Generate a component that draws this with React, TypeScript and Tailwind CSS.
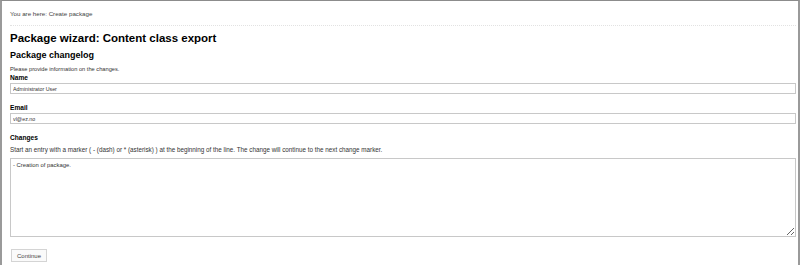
import React from "react";

const App: React.FC = () => {
  return (
    <div className="w-[800px] h-[265px] overflow-hidden bg-white border-t border-l-2 border-r-2 border-t-[#8c8c8c] border-l-[#9a9a9a] border-r-[#9a9a9a] font-['Liberation_Sans',Arial,sans-serif] text-[#222]">
      <div className="pl-[8px] flex flex-col">
        {/* breadcrumb */}
        <div className="mt-[9px] h-[8px] leading-[8px] text-[6.2px] text-[#444]">
          You are here: Create package
        </div>
        <div className="mt-[7px] w-[786px] border-t border-dotted border-[#e2e2e2]" />

        <h1 className="mt-[5px] h-[14px] leading-[14px] text-[11.5px] font-bold text-black">
          Package wizard: Content class export
        </h1>
        <h2 className="mt-[5px] h-[11px] leading-[11px] text-[9px] font-bold text-black">
          Package changelog
        </h2>
        <p className="mt-[4px] h-[8px] leading-[8px] text-[5.7px] text-[#333]">
          Please provide information on the changes.
        </p>

        {/* Name */}
        <label className="mt-[1px] h-[8px] leading-[8px] text-[6.6px] font-bold text-black">
          Name
        </label>
        <input
          type="text"
          defaultValue="Administrator User"
          className="mt-[1px] w-[786px] h-[11px] border border-[#c8c8c8] px-[2px] text-[5.3px] text-[#333] outline-none"
        />

        {/* Email */}
        <label className="mt-[10px] h-[8px] leading-[8px] text-[6.6px] font-bold text-black">
          Email
        </label>
        <input
          type="text"
          defaultValue="vl@ez.no"
          className="mt-[1px] w-[786px] h-[11px] border border-[#c8c8c8] px-[2px] text-[5.3px] text-[#333] outline-none"
        />

        {/* Changes */}
        <label className="mt-[10px] h-[8px] leading-[8px] text-[6.6px] font-bold text-black">
          Changes
        </label>
        <p className="mt-[4px] h-[8px] leading-[8px] text-[6.3px] text-[#333]">
          Start an entry with a marker ( - (dash) or * (asterisk) ) at the beginning of the line. The change will continue to the next change marker.
        </p>
        <textarea
          defaultValue="- Creation of package."
          className="mt-[4px] w-[786px] h-[79px] block border border-[#c8c8c8] px-[2px] py-[2px] text-[5.9px] leading-[8px] text-[#333] outline-none"
        />

        <div className="mt-[12px] flex">
          <button
            type="button"
            className="ml-[1px] w-[36px] h-[13px] flex items-center justify-center border border-[#d4d4d4] bg-[#fafafa] text-[6px] leading-[8px] text-[#444]"
          >
            Continue
          </button>
        </div>
      </div>
    </div>
  );
};

export default App;
